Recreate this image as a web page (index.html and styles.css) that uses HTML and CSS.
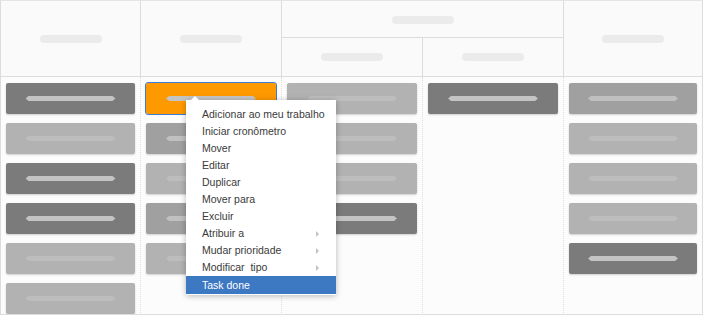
FILE: index.html
```html
<!DOCTYPE html>
<html>
<head>
<meta charset="utf-8">
<link rel="stylesheet" href="styles.css">
</head>
<body>
<div class="board">
  <div class="head">
    <div class="hcell c1"><span class="pill"></span></div>
    <div class="hcell c2"><span class="pill"></span></div>
    <div class="hcell grp"><span class="pill"></span></div>
    <div class="hcell c5"><span class="pill"></span></div>
    <div class="hcell sub1"><span class="pill"></span></div>
    <div class="hcell sub2"><span class="pill"></span></div>
  </div>
  <div class="body">
    <div class="col">
      <div class="card dark"><span class="bar"></span></div>
      <div class="card light"><span class="bar"></span></div>
      <div class="card dark"><span class="bar"></span></div>
      <div class="card dark"><span class="bar"></span></div>
      <div class="card light"><span class="bar"></span></div>
      <div class="card light"><span class="bar"></span></div>
    </div>
    <div class="col">
      <div class="card orange"><span class="bar"></span></div>
      <div class="card mid"><span class="bar"></span></div>
      <div class="card light"><span class="bar"></span></div>
      <div class="card mid"><span class="bar"></span></div>
      <div class="card light"><span class="bar"></span></div>
    </div>
    <div class="col">
      <div class="card light"><span class="bar"></span></div>
      <div class="card light"><span class="bar"></span></div>
      <div class="card light"><span class="bar"></span></div>
      <div class="card dark"><span class="bar"></span></div>
    </div>
    <div class="col">
      <div class="card dark"><span class="bar"></span></div>
    </div>
    <div class="col last">
      <div class="card mid"><span class="bar"></span></div>
      <div class="card light"><span class="bar"></span></div>
      <div class="card light"><span class="bar"></span></div>
      <div class="card light"><span class="bar"></span></div>
      <div class="card dark"><span class="bar"></span></div>
    </div>
  </div>
  <div class="menu">
    <div class="item">Adicionar ao meu trabalho</div>
    <div class="item">Iniciar cronômetro</div>
    <div class="item">Mover</div>
    <div class="item">Editar</div>
    <div class="item">Duplicar</div>
    <div class="item">Mover para</div>
    <div class="item">Excluir</div>
    <div class="item sub">Atribuir a</div>
    <div class="item sub">Mudar prioridade</div>
    <div class="item sub">Modificar &nbsp;tipo</div>
    <div class="item active">Task done</div>
  </div>
</div>
</body>
</html>
```

FILE: styles.css
```css
* { box-sizing: border-box; }
html, body { margin: 0; padding: 0; background: #fff; }
body { font-family: "Liberation Sans", Arial, sans-serif; }

.board {
  position: relative;
  width: 703px;
  height: 315px;
  border: 1px solid #dcdcdc;
  border-top: 1px solid #e4e4e4;
  background: #fcfcfc;
  overflow: hidden;
}

.head {
  display: grid;
  grid-template-columns: 140px 141px 141px 141px 1fr;
  grid-template-rows: 37px 38px;
  height: 76px;
  border-bottom: 1px solid #dcdcdc;
  background: #fafafa;
}
.hcell {
  display: flex;
  align-items: center;
  justify-content: center;
  border-right: 1px solid #dcdcdc;
}
.c1 { grid-column: 1; grid-row: 1 / 3; }
.c2 { grid-column: 2; grid-row: 1 / 3; }
.grp { grid-column: 3 / 5; grid-row: 1; border-bottom: 1px solid #dcdcdc; }
.sub1 { grid-column: 3; grid-row: 2; }
.sub2 { grid-column: 4; grid-row: 2; }
.c5 { grid-column: 5; grid-row: 1 / 3; border-right: none; }

.pill {
  display: block;
  width: 62px;
  height: 8px;
  border-radius: 4px;
  background: #ebebeb;
}
.grp .pill { margin-top: 1px; }

.body {
  display: grid;
  grid-template-columns: 140px 141px 141px 141px 1fr;
  height: 238px;
}
.col {
  display: flex;
  flex-direction: column;
  gap: 9px;
  padding: 6px 5px 0 5px;
  border-right: 1px dotted #dedede;
}
.col.last { border-right: none; }

.card {
  flex: none;
  height: 31px;
  border-radius: 2px;
  display: flex;
  align-items: center;
  justify-content: center;
  box-shadow: 0 1px 2px rgba(0,0,0,0.18);
}
.card.dark { background: #7b7b7b; }
.card.mid { background: #a0a0a0; }
.card.light { background: #b2b2b2; }
.card.orange {
  background: #ff9900;
  outline: 1px solid #3d7bd0;
  box-shadow: none;
}

.bar {
  display: block;
  width: 90px;
  height: 5px;
  background: #c4c4c4;
  clip-path: polygon(0 50%, 3px 0, calc(100% - 3px) 0, 100% 50%, calc(100% - 3px) 100%, 3px 100%);
}
.light .bar { background: #bdbdbd; }
.mid .bar { background: #c0c0c0; }

.menu {
  position: absolute;
  left: 185px;
  top: 99px;
  width: 150px;
  padding: 6px 0 1px;
  background: #fff;
  box-shadow: 0 1px 6px rgba(0,0,0,0.28);
  font-size: 10.5px;
  color: #3a3a3a;
}
.menu::before {
  content: "";
  position: absolute;
  left: 5px;
  top: -4px;
  border-left: 4px solid transparent;
  border-right: 4px solid transparent;
  border-bottom: 4px solid #fff;
}
.item {
  position: relative;
  height: 17px;
  line-height: 17px;
  padding-left: 16px;
  white-space: nowrap;
}
.item.sub::after {
  content: "";
  position: absolute;
  left: 130px;
  top: 6px;
  border-top: 3px solid transparent;
  border-bottom: 3px solid transparent;
  border-left: 3px solid #c2c2c2;
}
.item.active {
  background: #3d78c3;
  color: #fff;
  height: 18px;
  line-height: 18px;
}
```
